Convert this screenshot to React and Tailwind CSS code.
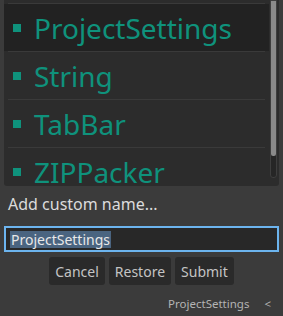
import React from 'react';

const rows = ['ProjectSettings', 'String', 'TabBar', 'ZIPPacker'];

const App = () => {
  return (
    <div
      className="w-[283px] h-[316px] bg-[#3b3b3b] flex flex-col px-[4px] overflow-hidden"
      style={{ fontFamily: '"Noto Sans", "Open Sans", sans-serif' }}
    >
      {/* class list */}
      <div className="relative h-[186px] bg-[#2c2c2c] rounded-b-[3px] overflow-hidden shrink-0">
        <div className="pt-[3px] pr-[10px]">
          {rows.map((name, i) => (
            <div key={name}>
              <div className="h-px mx-[4px] bg-[#3a3a3a]" />
              <div className={`h-[47px] flex items-center pl-[9px] ${i === 0 ? 'bg-[#222222]' : ''}`}>
                <div className="w-[8px] h-[8px] bg-[#0f927c] mr-[13px]" />
                <span className="text-[28px] leading-none text-[#0f927c]">{name}</span>
              </div>
            </div>
          ))}
        </div>
        {/* scrollbar */}
        <div className="absolute top-0 right-[2px] w-[7px] h-[178px] rounded-b-[3px] bg-[#262626] border border-[#3e3e3e] flex flex-col">
          <div className="h-[155px] bg-[#8a8a8a] rounded-b-[2px]" />
        </div>
      </div>

      <div className="mt-[8px] pl-[4px] text-[16px] leading-[20px] text-[#dcdcdc]">Add custom name...</div>

      <div className="mt-[12px] h-[26px] border-2 border-[#6cb4ee] bg-[#282828] flex items-center px-[4px]">
        <span className="bg-[#4a6480] text-[#e8e8e8] text-[14px] leading-[17px] px-px">ProjectSettings</span>
      </div>

      <div className="mt-[5px] flex justify-center gap-[4px]">
        {['Cancel', 'Restore', 'Submit'].map((b) => (
          <button
            key={b}
            className="h-[28px] px-[6px] rounded-[3px] bg-[#2a2a2a] text-[14px] text-[#c4c4c4]"
          >
            {b}
          </button>
        ))}
      </div>

      <div className="mt-[11px] flex justify-end items-center pr-[8px] text-[11.5px] leading-[16px] text-[#b4b4b4]">
        <span>ProjectSettings</span>
        <span className="ml-[15px]">&lt;</span>
      </div>
    </div>
  );
};

export default App;
